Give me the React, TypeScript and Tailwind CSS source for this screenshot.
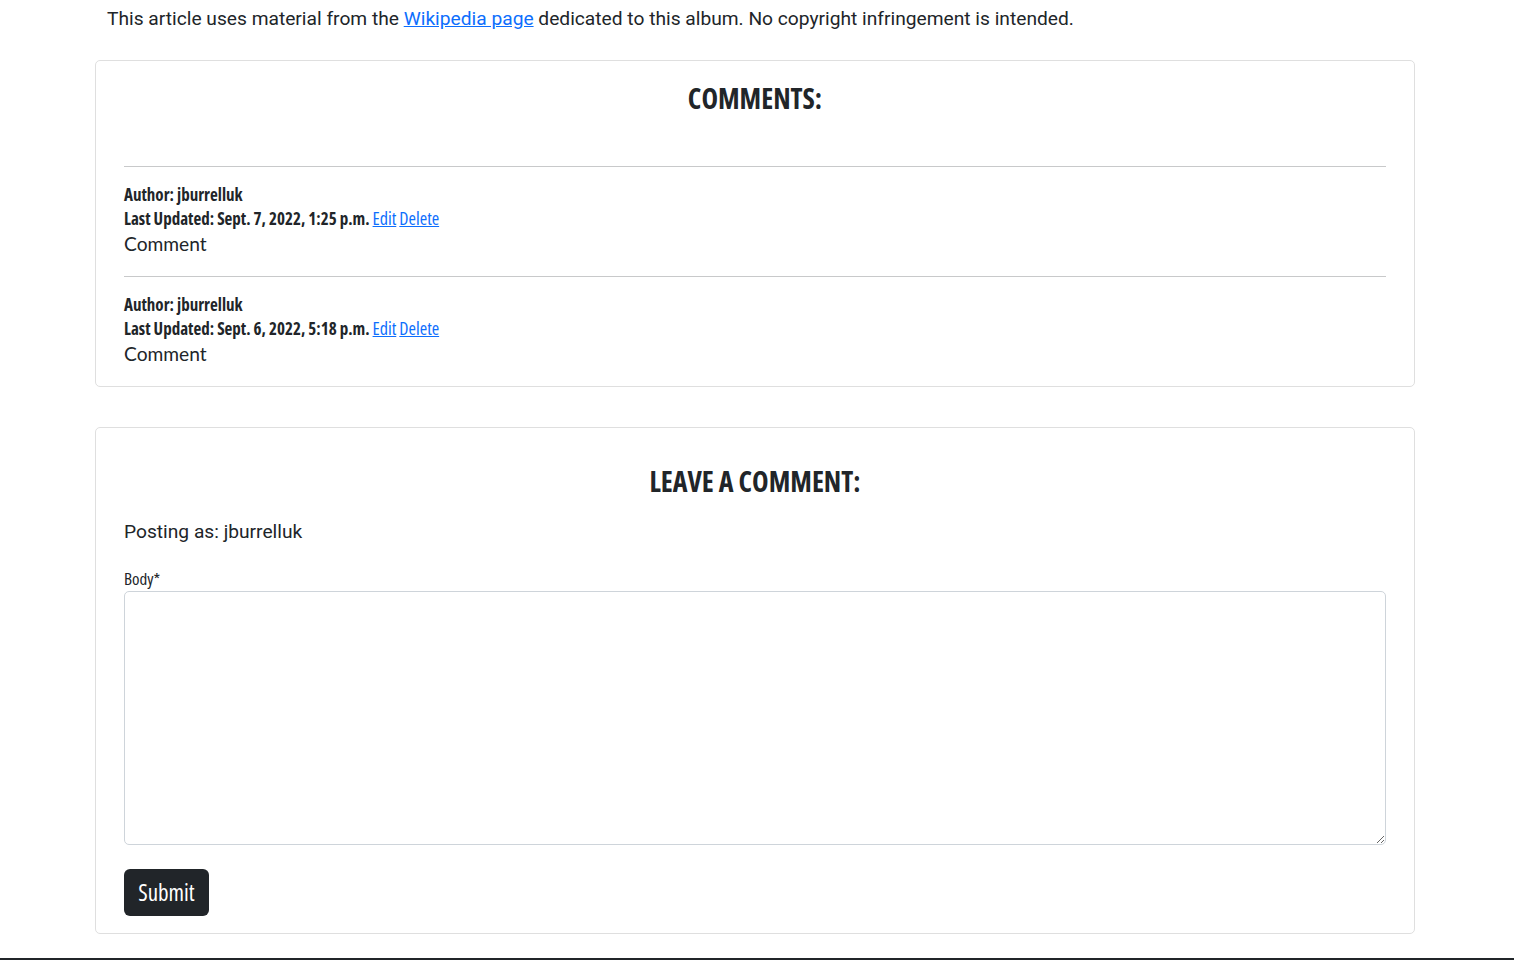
const narrow = "font-['Open_Sans',sans-serif] [font-stretch:75%]";

const comments = [
  { author: "jburrelluk", updated: "Sept. 7, 2022, 1:25 p.m.", body: "Comment" },
  { author: "jburrelluk", updated: "Sept. 6, 2022, 5:18 p.m.", body: "Comment" },
];

function CommentItem({ author, updated, body }: { author: string; updated: string; body: string }) {
  return (
    <div>
      <hr className="border-0 border-t border-[#c8c9ca] m-0" />
      <div className="pt-[16px] pb-[20px]">
        <p className={`${narrow} font-bold text-[17px] leading-[24px]`}>Author: {author}</p>
        <p className={`${narrow} font-bold text-[17px] leading-[24px]`}>
          Last Updated: {updated}{" "}
          <a href="#" className="font-normal text-[18px] leading-none text-[#0d6efd] underline">Edit</a>{" "}
          <a href="#" className="font-normal text-[18px] leading-none text-[#0d6efd] underline">Delete</a>
        </p>
        <p className="font-['Lato',sans-serif] text-[19.2px] leading-[25px]">{body}</p>
      </div>
    </div>
  );
}

export default function App() {
  return (
    <div className="min-h-[960px] bg-white flex flex-col font-['Roboto',sans-serif] text-[#212529]">
      <div className="w-[1320px] ml-[95px]">
        <p className="pl-[12px] pt-[5px] text-[19.2px] leading-[28.8px]">
          This article uses material from the{" "}
          <a href="#" className="text-[#0d6efd] underline">Wikipedia page</a>{" "}
          dedicated to this album. No copyright infringement is intended.
        </p>

        <section className="mt-[26px] border border-[#dfdfdf] rounded-[5px] px-[28px] pt-[21px]">
          <h2 className={`${narrow} font-bold text-[28px] leading-[33.6px] text-center uppercase`}>
            Comments:
          </h2>
          <div className="mt-[51px]">
            {comments.map((c, i) => (
              <CommentItem key={i} {...c} />
            ))}
          </div>
        </section>

        <section className="mt-[40px] border border-[#dfdfdf] rounded-[5px] px-[28px] pt-[37px] pb-[17px]">
          <h2 className={`${narrow} font-bold text-[28px] leading-[33.6px] text-center uppercase`}>
            Leave a comment:
          </h2>
          <p className="mt-[19px] text-[19.2px] leading-[28.8px]">Posting as: jburrelluk</p>
          <form className="mt-[20px]" onSubmit={(e) => e.preventDefault()}>
            <label className={`${narrow} block text-[17px] leading-[24px]`}>Body*</label>
            <textarea className="block w-full h-[254px] border border-[#ced4da] rounded-[5px] resize-y" />
            <button
              type="submit"
              className={`${narrow} mt-[24px] w-[85px] h-[47px] bg-[#212529] text-white text-[23px] rounded-[6px]`}
            >
              Submit
            </button>
          </form>
        </section>
      </div>
      <div className="mt-[24px] h-[20px] bg-[#212529]" />
    </div>
  );
}
